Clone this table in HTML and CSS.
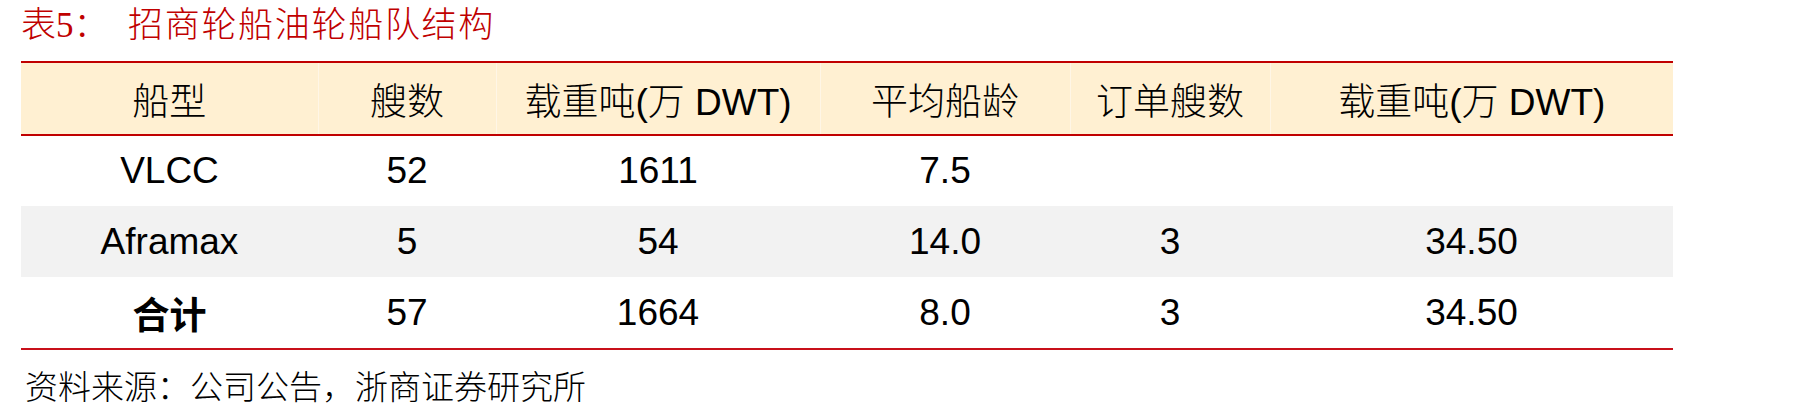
FILE: index.html
```html
<!DOCTYPE html>
<html lang="zh-CN">
<head>
<meta charset="utf-8">
<title>招商轮船油轮船队结构</title>
<link rel="stylesheet" href="styles.css">
</head>
<body>
<div class="page">
  <h1 class="title"><span class="title-num">表5：</span><span class="title-text">招商轮船油轮船队结构</span></h1>
  <table class="fleet">
    <colgroup>
      <col class="c1"><col class="c2"><col class="c3"><col class="c4"><col class="c5"><col class="c6">
    </colgroup>
    <thead>
      <tr>
        <th>船型</th>
        <th>艘数</th>
        <th>载重吨(万 DWT)</th>
        <th>平均船龄</th>
        <th>订单艘数</th>
        <th>载重吨(万 DWT)</th>
      </tr>
    </thead>
    <tbody>
      <tr>
        <td>VLCC</td>
        <td>52</td>
        <td>1611</td>
        <td>7.5</td>
        <td></td>
        <td></td>
      </tr>
      <tr class="alt">
        <td>Aframax</td>
        <td>5</td>
        <td>54</td>
        <td>14.0</td>
        <td>3</td>
        <td>34.50</td>
      </tr>
      <tr class="total">
        <td class="label">合计</td>
        <td>57</td>
        <td>1664</td>
        <td>8.0</td>
        <td>3</td>
        <td>34.50</td>
      </tr>
    </tbody>
  </table>
  <p class="source">资料来源：公司公告，浙商证券研究所</p>
</div>
</body>
</html>
```

FILE: styles.css
```css
html, body {
  margin: 0;
  padding: 0;
  background: #ffffff;
}

.page {
  width: 1798px;
  height: 417px;
  overflow: hidden;
}

.title {
  margin: 0;
  padding-left: 21px;
  height: 52px;
  line-height: 52px;
  font-family: "Liberation Serif", "Noto Sans CJK SC", serif;
  font-weight: 300;
  font-size: 35px;
  color: #c00000;
  white-space: nowrap;
}

.title-num {
  display: inline-block;
  width: 107px;
}

.title-num .digit {
  font-size: 38px;
}

.title-text {
  letter-spacing: 1.7px;
}

.fleet {
  margin: 9px 0 0 21px;
  width: 1652px;
  table-layout: fixed;
  border-collapse: collapse;
  font-family: "Liberation Sans", "Noto Sans CJK SC", sans-serif;
  font-size: 37px;
  color: #000000;
  border-bottom: 2px solid #c8101a;
}

.c1 { width: 297px; }
.c2 { width: 178px; }
.c3 { width: 324px; }
.c4 { width: 250px; }
.c5 { width: 200px; }
.c6 { width: 403px; }

.fleet th,
.fleet td {
  padding: 0;
  text-align: center;
  vertical-align: middle;
  white-space: nowrap;
}

.fleet thead tr {
  background: #fff0d2;
  border-top: 2px solid #c00000;
  border-bottom: 2px solid #c00000;
}

.fleet th {
  height: 71px;
  font-weight: 300;
  border-left: 1px solid #fff6e6;
}

.fleet th:first-child {
  border-left: none;
}

.fleet td {
  height: 71px;
}

.fleet tbody tr:first-child td {
  height: 70px;
}

.fleet tr.alt {
  background: #f2f2f2;
}

.fleet td.label {
  font-weight: 700;
}

.source {
  margin: 0;
  padding-left: 25px;
  height: 67px;
  line-height: 70px;
  font-family: "Noto Sans CJK SC", sans-serif;
  font-weight: 300;
  font-size: 33px;
  color: #000000;
  white-space: nowrap;
}
```
